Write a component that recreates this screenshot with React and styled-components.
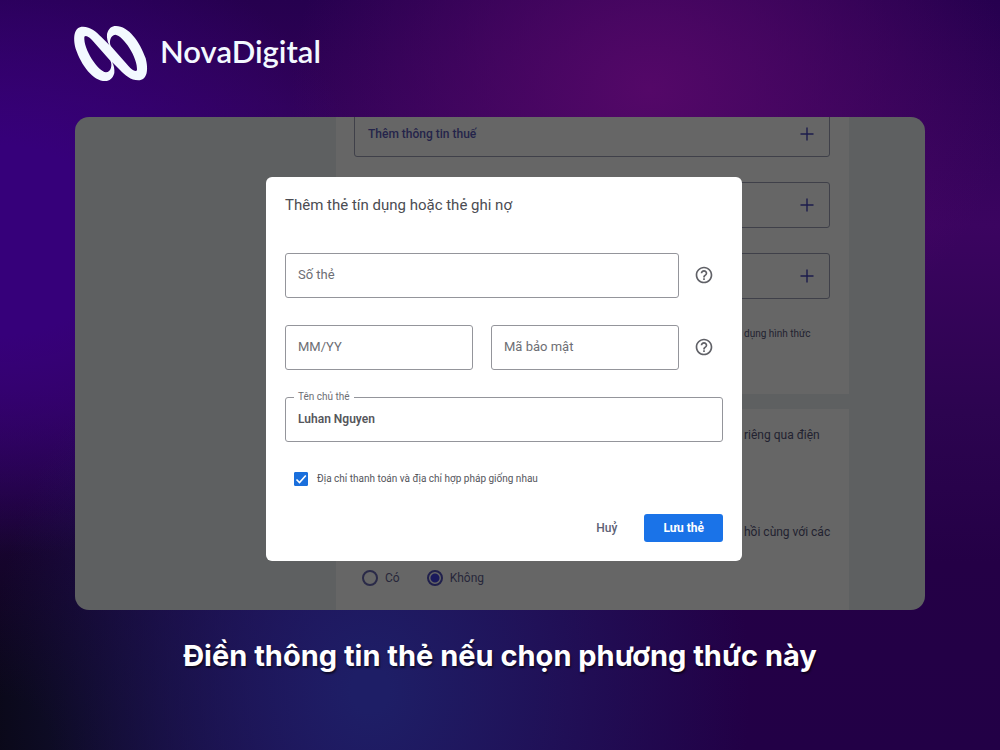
import React, { useState } from "react";
import styled, { createGlobalStyle } from "styled-components";
import { MdHelpOutline } from "react-icons/md";

const payments = [
  { id: "tax", label: "Thêm thông tin thuế" },
  { id: "profile", label: "" },
  { id: "method", label: "" },
];

function PlusIcon() {
  return (
    <svg width="14" height="14" viewBox="0 0 14 14" fill="none" stroke="#1c1c4c" strokeWidth="1.4" aria-hidden="true">
      <path d="M7 0.5V13.5M0.5 7H13.5" />
    </svg>
  );
}

function Logo() {
  return (
    <Brand>
      <svg width="75" height="57" viewBox="45 42 225 171" fill="#f3f9ff" overflow="visible" aria-hidden="true">
        <path
          fillRule="evenodd"
          d="M69 50C92 50 109 66 124 81L148 105C142 95 140 83 141 72C146 55 155 48 168 48C205 48 240 95 257 145C266 180 262 211 235 211C212 211 195 195 180 180L156 156C162 166 164 178 163 189C158 206 149 213 136 213C99 213 64 166 47 116C38 81 42 50 69 50Z
            M73 80C70 118 114 184 138 187C153 186 158 164 151 152L98 92C90 82 78 74 73 80Z
            M231 181C234 143 190 77 166 74C151 75 146 97 153 109L206 169C214 179 226 187 231 181Z"
        />
      </svg>
      <span>NovaDigital</span>
    </Brand>
  );
}

export default function App() {
  const [form, setForm] = useState({ number: "", expiry: "", code: "", owner: "Luhan Nguyen" });
  const [sameAddress, setSameAddress] = useState(true);
  const [mail, setMail] = useState("no");

  const handleChange = (e) => {
    setForm({ ...form, [e.target.name]: e.target.value });
  };

  return (
    <Slide>
      <GlobalStyle />
      <Logo />
      <Screen>
        <Page>
          <Card>
            {payments.map((item) => (
              <AddRow key={item.id} type="button" aria-label={item.label || "Thêm"}>
                <span>{item.label}</span>
                <PlusIcon />
              </AddRow>
            ))}
            <Note $small>dụng hình thức</Note>
          </Card>
          <Card $last>
            <Note>riêng qua điện</Note>
            <Note>hồi cùng với các</Note>
            <Choices>
              <Choice>
                <Radio name="mail" checked={mail === "yes"} onChange={() => setMail("yes")} />
                Có
              </Choice>
              <Choice>
                <Radio name="mail" checked={mail === "no"} onChange={() => setMail("no")} />
                Không
              </Choice>
            </Choices>
          </Card>
        </Page>
        <Overlay>
          <Dialog role="dialog" aria-labelledby="card-title">
            <h2 id="card-title">Thêm thẻ tín dụng hoặc thẻ ghi nợ</h2>
            <Fields>
              <FieldRow>
                <TextBox name="number" aria-label="Số thẻ" placeholder="Số thẻ" value={form.number} onChange={handleChange} />
                <Help type="button" aria-label="?">
                  <MdHelpOutline size={20} />
                </Help>
              </FieldRow>
              <FieldRow>
                <TextBox name="expiry" aria-label="MM/YY" placeholder="MM/YY" value={form.expiry} onChange={handleChange} />
                <TextBox name="code" aria-label="Mã bảo mật" placeholder="Mã bảo mật" value={form.code} onChange={handleChange} />
                <Help type="button" aria-label="?">
                  <MdHelpOutline size={20} />
                </Help>
              </FieldRow>
              <FieldRow>
                <TextBox id="owner" name="owner" value={form.owner} onChange={handleChange} />
                <FloatLabel htmlFor="owner">Tên chủ thẻ</FloatLabel>
              </FieldRow>
            </Fields>
            <CheckRow>
              <CheckBox>
                <input type="checkbox" checked={sameAddress} onChange={(e) => setSameAddress(e.target.checked)} />
                <svg viewBox="0 0 14 14" fill="none" stroke="#fff" strokeWidth="1.6" aria-hidden="true">
                  <path d="M2.5 7.5L5.5 10.5L11.8 3.5" />
                </svg>
              </CheckBox>
              Địa chỉ thanh toán và địa chỉ hợp pháp giống nhau
            </CheckRow>
            <Actions>
              <Button type="button">Huỷ</Button>
              <Button type="button" $primary>Lưu thẻ</Button>
            </Actions>
          </Dialog>
        </Overlay>
      </Screen>
      <Caption>Điền thông tin thẻ nếu chọn phương thức này</Caption>
    </Slide>
  );
}

const GlobalStyle = createGlobalStyle`
  * {
    box-sizing: border-box;
  }
  body {
    margin: 0;
    font-family: Roboto, "Noto Sans", sans-serif;
  }
  button, input {
    font-family: inherit;
  }
`;

const Slide = styled.main`
  min-height: 100vh;
  padding: 24px 75px 0;
  overflow: hidden;
  background:
    radial-gradient(ellipse 36% 40% at 65% 12%, #540868 0%, rgba(84, 8, 104, 0) 100%),
    radial-gradient(ellipse 38% 60% at 37% 92%, #1e1e66 5%, rgba(30, 30, 102, 0) 100%),
    radial-gradient(ellipse 38% 42% at 0% 32%, #36007a 30%, rgba(54, 0, 122, 0) 100%),
    radial-gradient(ellipse 34% 48% at 0% 100%, #0a0818 15%, rgba(10, 8, 24, 0) 100%),
    linear-gradient(180deg, #26004f 0%, #3b0460 30%, #2c0450 55%, #240046 75%, #220046 100%);
`;

const Brand = styled.div`
  display: flex;
  align-items: center;
  gap: 10px;
  height: 57px;
  color: #f3f9ff;
  font-family: Lato, sans-serif;
  font-size: 31px;
  font-weight: 600;
  line-height: 36px;
  span {
    padding-bottom: 4px;
  }
`;

const Screen = styled.section`
  position: relative;
  margin-top: 36px;
  height: 493px;
  overflow: hidden;
  border-radius: 14px;
  background: #5e6061;
`;

/* scrolled down a little, so the first row is cut by the top edge */
const Page = styled.div`
  display: flex;
  flex-direction: column;
  gap: 15px;
  margin-top: -6px;
  padding: 0 76px 0 261px;
`;

const Card = styled.div`
  display: flex;
  flex-direction: column;
  gap: ${({ $last }) => ($last ? "77px" : "25px")};
  height: ${({ $last }) => ($last ? "220px" : "283px")};
  padding: ${({ $last }) => ($last ? "16px 19px 0 18px" : "0 19px 0 18px")};
  background: #666;
`;

const AddRow = styled.button`
  display: flex;
  align-items: center;
  justify-content: space-between;
  height: 46px;
  flex-shrink: 0;
  padding: 0 15px 0 13px;
  border: 1px solid #3f4049;
  border-radius: 3px;
  background: none;
  color: #24244a;
  font-size: 12px;
  font-weight: 500;
`;

const Note = styled.p`
  align-self: flex-end;
  width: 86px;
  margin: 0;
  color: #222230;
  font-size: ${({ $small }) => ($small ? "10px" : "12px")};
  line-height: 20px;
  white-space: nowrap;
`;

const Choices = styled.div`
  display: flex;
  gap: 27px;
  margin-top: -51px;
  padding-left: 8px;
`;

const Choice = styled.label`
  display: flex;
  align-items: center;
  gap: 7px;
  color: #26263a;
  font-size: 12px;
  line-height: 20px;
`;

const Radio = styled.input.attrs({ type: "radio" })`
  appearance: none;
  width: 16px;
  height: 16px;
  margin: 0;
  border: 2px solid #2a2a48;
  border-radius: 50%;
  &:checked {
    border-color: #20204c;
    background: radial-gradient(circle, #1a1a5c 4px, transparent 5px);
  }
`;

const Overlay = styled.div`
  position: absolute;
  inset: 0;
  display: flex;
  align-items: center;
  justify-content: center;
  padding: 10px 0 0 8px;
`;

const Dialog = styled.div`
  width: 476px;
  padding: 18px 19px 19px;
  border-radius: 6px;
  background: #fff;
  h2 {
    margin: 0;
    color: #4b4c52;
    font-size: 15px;
    font-weight: 400;
    line-height: 20px;
  }
`;

const Fields = styled.div`
  display: flex;
  flex-direction: column;
  gap: 27px;
  margin-top: 38px;
`;

const FieldRow = styled.div`
  position: relative;
  display: flex;
  align-items: center;
  gap: 18px;
`;

const TextBox = styled.input`
  flex: 1;
  min-width: 0;
  height: 45px;
  padding: 0 12px;
  border: 1px solid #94959b;
  border-radius: 3px;
  outline: none;
  background: #fff;
  color: #55565b;
  font-size: 12px;
  font-weight: 600;
  &::placeholder {
    color: #6d6e74;
    font-size: 13px;
    font-weight: 400;
    opacity: 1;
  }
`;

const FloatLabel = styled.label`
  position: absolute;
  top: -6px;
  left: 9px;
  padding: 0 4px;
  background: #fff;
  color: #6d6e74;
  font-size: 10px;
  line-height: 12px;
`;

const Help = styled.button`
  display: flex;
  padding: 0;
  margin-right: 9px;
  margin-left: -3px;
  border: 0;
  background: none;
  color: #606167;
`;

const CheckRow = styled.label`
  display: flex;
  align-items: center;
  gap: 9px;
  margin-top: 27px;
  padding-left: 9px;
  color: #55565c;
  font-size: 10px;
  line-height: 20px;
`;

const CheckBox = styled.span`
  position: relative;
  display: flex;
  input {
    appearance: none;
    width: 14px;
    height: 14px;
    margin: 0;
    border: 1px solid #1a6fdc;
    border-radius: 1px;
  }
  input:checked {
    background: #1a6fdc;
  }
  svg {
    position: absolute;
    inset: 0;
    pointer-events: none;
  }
`;

const Actions = styled.div`
  display: flex;
  justify-content: flex-end;
  gap: 8px;
  margin-top: 25px;
`;

const Button = styled.button`
  height: 28px;
  padding: 0 19px;
  border: 0;
  border-radius: 3px;
  background: ${({ $primary }) => ($primary ? "#1a73e8" : "transparent")};
  color: ${({ $primary }) => ($primary ? "#fff" : "#5d6075")};
  font-size: 12px;
  font-weight: ${({ $primary }) => ($primary ? 700 : 500)};
`;

const Caption = styled.h1`
  margin: 28px 0 0;
  color: #fff;
  font-family: Inter, "Noto Sans", sans-serif;
  font-size: 29px;
  font-weight: 700;
  line-height: 36px;
  text-align: center;
  text-shadow: 1px 2px 2px rgba(0, 0, 0, 0.6);
`;
